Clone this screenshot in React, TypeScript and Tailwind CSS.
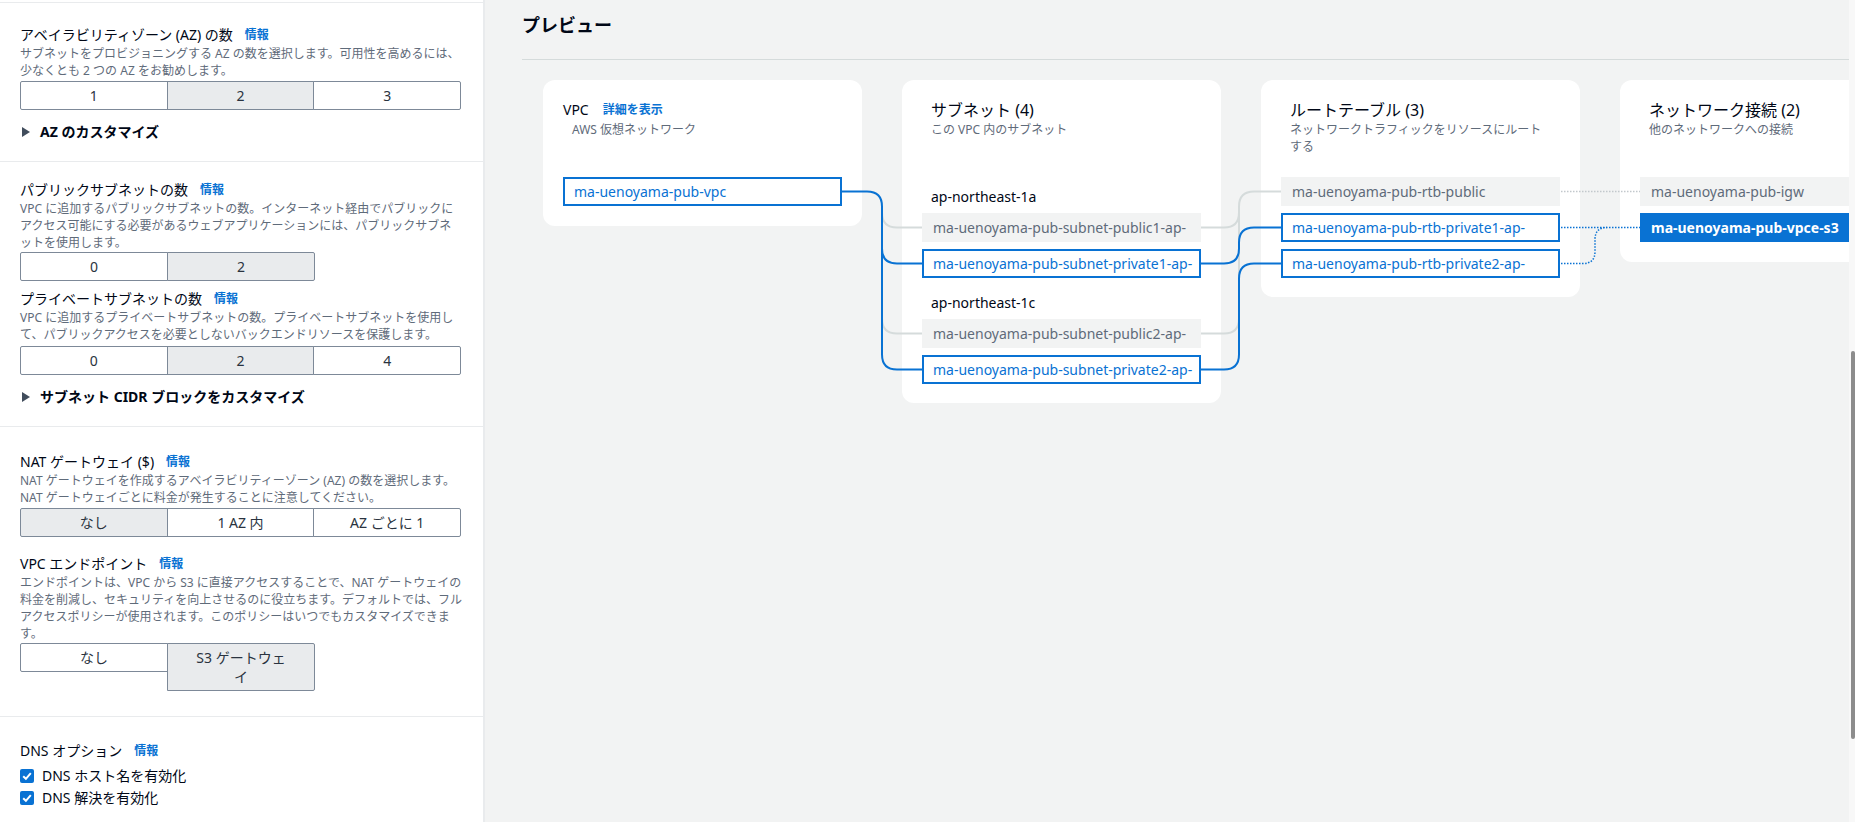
import React from "react";

type BoxKind = "gray" | "outline" | "solid";

function InfoLink() {
  return <a className="ml-[12px] text-[12px] font-bold text-[#0972d3] cursor-pointer">情報</a>;
}

function FieldTitle({ children }: { children: React.ReactNode }) {
  return (
    <div className="flex items-center text-[14px] leading-[20px] text-[#000716]">
      <span>{children}</span>
      <InfoLink />
    </div>
  );
}

function Desc({ children, className = "" }: { children: React.ReactNode; className?: string }) {
  return <p className={`text-[12px] leading-[17px] text-[#5f6b7a] ${className}`}>{children}</p>;
}

function Segmented({
  options,
  selected,
  className = "",
}: {
  options: React.ReactNode[];
  selected: number;
  className?: string;
}) {
  return (
    <div className={`flex items-start ${className}`}>
      {options.map((opt, i) => (
        <button
          key={i}
          className={`flex-1 -ml-px first:ml-0 border border-[#7d8998] py-[4px] text-[14px] leading-[19px] text-[#2a3340] text-center first:rounded-l-[2px] last:rounded-r-[2px] ${
            i === selected ? "bg-[#e9ebed]" : "bg-white"
          }`}
        >
          {opt}
        </button>
      ))}
    </div>
  );
}

function Expander({ children }: { children: React.ReactNode }) {
  return (
    <div className="flex items-center gap-[10px] text-[14px] font-bold leading-[20px] text-[#000716]">
      <svg width="8" height="10" viewBox="0 0 8 10" className="ml-[2px]">
        <path d="M0 0 L8 5 L0 10 Z" fill="#414d5c" />
      </svg>
      <span>{children}</span>
    </div>
  );
}

function Checkbox({ label }: { label: string }) {
  return (
    <label className="flex items-center gap-[8px] text-[14px] leading-[22px] text-[#000716]">
      <span className="flex h-[14px] w-[14px] items-center justify-center rounded-[2px] bg-[#0972d3]">
        <svg width="14" height="14" viewBox="0 0 14 14">
          <path d="M3.2 7.2 L5.9 9.8 L10.8 4.2" stroke="white" strokeWidth="2" fill="none" />
        </svg>
      </span>
      {label}
    </label>
  );
}

function Box({ kind, children, w = "w-[279px]" }: { kind: BoxKind; children: React.ReactNode; w?: string }) {
  const base = `${w} h-[29px] overflow-hidden whitespace-nowrap text-[14px]`;
  if (kind === "gray")
    return <div className={`${base} bg-[#f2f3f3] px-[11px] leading-[29px] text-[#5f6b7a]`}>{children}</div>;
  if (kind === "solid")
    return <div className={`${base} bg-[#0972d3] px-[11px] leading-[29px] font-bold text-white`}>{children}</div>;
  return (
    <div className={`${base} border-2 border-[#0972d3] bg-white px-[9px] leading-[25px] text-[#0972d3]`}>{children}</div>
  );
}

function CardHeader({ title, desc }: { title: React.ReactNode; desc: React.ReactNode }) {
  return (
    <div className="h-[77px] pl-[9px]">
      <div className="text-[16px] leading-[20px] text-[#000716]">{title}</div>
      <div className="mt-[1px] text-[12px] leading-[17px] text-[#5f6b7a]">{desc}</div>
    </div>
  );
}

function Connectors() {
  const blue = "#0972d3";
  const gray = "#d5dbdb";
  return (
    <svg
      className="pointer-events-none absolute left-0 top-0 z-10 overflow-visible"
      width="1200"
      height="330"
      fill="none"
    >
      {/* gray links */}
      <g stroke={gray} strokeWidth="2">
        <path d="M339 132.5 Q339 147.5 354 147.5 H379" />
        <path d="M339 238.5 Q339 253.5 354 253.5 H379" />
        <path d="M658 147.5 H681 Q696 147.5 696 132.5 V126.5 Q696 111.5 711 111.5 H738" />
        <path d="M658 253.5 H681 Q696 253.5 696 238.5 V126.5" />
      </g>
      {/* blue links */}
      <g stroke={blue} strokeWidth="2">
        <path d="M299 111.5 H324 Q339 111.5 339 126.5 V274.5 Q339 289.5 354 289.5 H379" />
        <path d="M339 168.5 Q339 183.5 354 183.5 H379" />
        <path d="M658 183.5 H681 Q696 183.5 696 168.5 V162.5 Q696 147.5 711 147.5 H738" />
        <path d="M658 289.5 H681 Q696 289.5 696 274.5 V198.5 Q696 183.5 711 183.5 H738" />
      </g>
      {/* dotted links */}
      <path d="M1018 111.5 H1097" stroke="#c2c8cc" strokeWidth="1.5" strokeDasharray="1.5 1.5" />
      <g stroke={blue} strokeWidth="1.5" strokeDasharray="1.5 1.5">
        <path d="M1018 147.5 H1097" />
        <path d="M1018 183.5 H1040 Q1052 183.5 1052 171.5 V159.5 Q1052 147.5 1064 147.5" />
      </g>
    </svg>
  );
}

function Preview() {
  return (
    <main className="h-[822px] flex-1 overflow-hidden bg-[#f2f3f3] pl-[37px]">
      <h2 className="pt-[13px] text-[18px] font-bold leading-[24px] text-[#000716]">プレビュー</h2>
      <div className="mt-[22px] border-t border-[#d5dbdb]" />
      <div className="pl-[21px] pt-[20px]">
        <div className="relative flex items-start gap-[40px]">
          {/* VPC */}
          <div className="w-[319px] shrink-0 rounded-[12px] bg-white px-[20px] pt-[20px] pb-[20px]">
            <div className="h-[77px]">
              <div className="flex items-center text-[14px] leading-[20px] text-[#000716]">
                VPC
                <a className="ml-[14px] text-[12px] font-bold text-[#0972d3]">詳細を表示</a>
              </div>
              <div className="mt-[1px] pl-[9px] text-[12px] leading-[17px] text-[#5f6b7a]">AWS 仮想ネットワーク</div>
            </div>
            <Box kind="outline">ma-uenoyama-pub-vpc</Box>
          </div>

          {/* Subnets */}
          <div className="w-[319px] shrink-0 rounded-[12px] bg-white px-[20px] pt-[20px] pb-[19px]">
            <CardHeader title="サブネット (4)" desc="この VPC 内のサブネット" />
            <div className="mt-[10px] pl-[9px] text-[14px] leading-[20px] text-[#000716]">ap-northeast-1a</div>
            <div className="mt-[6px] flex flex-col gap-[7px]">
              <Box kind="gray">ma-uenoyama-pub-subnet-public1-ap-</Box>
              <Box kind="outline">ma-uenoyama-pub-subnet-private1-ap-</Box>
            </div>
            <div className="mt-[15px] pl-[9px] text-[14px] leading-[20px] text-[#000716]">ap-northeast-1c</div>
            <div className="mt-[6px] flex flex-col gap-[7px]">
              <Box kind="gray">ma-uenoyama-pub-subnet-public2-ap-</Box>
              <Box kind="outline">ma-uenoyama-pub-subnet-private2-ap-</Box>
            </div>
          </div>

          {/* Route tables */}
          <div className="w-[319px] shrink-0 rounded-[12px] bg-white px-[20px] pt-[20px] pb-[19px]">
            <CardHeader
              title="ルートテーブル (3)"
              desc={<div className="w-[256px]">ネットワークトラフィックをリソースにルートする</div>}
            />
            <div className="flex flex-col gap-[7px]">
              <Box kind="gray">ma-uenoyama-pub-rtb-public</Box>
              <Box kind="outline">ma-uenoyama-pub-rtb-private1-ap-</Box>
              <Box kind="outline">ma-uenoyama-pub-rtb-private2-ap-</Box>
            </div>
          </div>

          {/* Network connections */}
          <div className="w-[320px] shrink-0 rounded-[12px] bg-white pl-[20px] pt-[20px] pb-[20px]">
            <CardHeader title="ネットワーク接続 (2)" desc="他のネットワークへの接続" />
            <div className="flex flex-col gap-[7px]">
              <Box kind="gray" w="w-[300px]">ma-uenoyama-pub-igw</Box>
              <Box kind="solid" w="w-[300px]">ma-uenoyama-pub-vpce-s3</Box>
            </div>
          </div>

          <Connectors />
        </div>
      </div>
    </main>
  );
}

function Settings() {
  return (
    <aside className="h-[822px] w-[485px] shrink-0 overflow-hidden border-r-2 border-[#e9ebed] bg-white">
      <div className="h-[2px]" />
      <section className="border-y border-[#e9ebed] pl-[20px] pr-[22px] pt-[22px] pb-[19px]">
        <FieldTitle>アベイラビリティゾーン (AZ) の数</FieldTitle>
        <Desc>サブネットをプロビジョニングする AZ の数を選択します。可用性を高めるには、少なくとも 2 つの AZ をお勧めします。</Desc>
        <Segmented className="mt-[2px]" options={["1", "2", "3"]} selected={1} />
        <div className="mt-[12px]">
          <Expander>AZ のカスタマイズ</Expander>
        </div>
      </section>

      <section className="border-b border-[#e9ebed] pl-[20px] pr-[22px] pt-[18px] pb-[19px]">
        <FieldTitle>パブリックサブネットの数</FieldTitle>
        <Desc>VPC に追加するパブリックサブネットの数。インターネット経由でパブリックにアクセス可能にする必要があるウェブアプリケーションには、パブリックサブネットを使用します。</Desc>
        <Segmented className="mt-[1px] w-[295px]" options={["0", "2"]} selected={1} />
        <div className="mt-[8px]">
          <FieldTitle>プライベートサブネットの数</FieldTitle>
        </div>
        <Desc>VPC に追加するプライベートサブネットの数。プライベートサブネットを使用して、パブリックアクセスを必要としないバックエンドリソースを保護します。</Desc>
        <Segmented className="mt-[3px]" options={["0", "2", "4"]} selected={1} />
        <div className="mt-[12px]">
          <Expander>サブネット CIDR ブロックをカスタマイズ</Expander>
        </div>
      </section>

      <section className="border-b border-[#e9ebed] pl-[20px] pr-[22px] pt-[25px] pb-[25px]">
        <FieldTitle>NAT ゲートウェイ ($)</FieldTitle>
        <Desc>NAT ゲートウェイを作成するアベイラビリティーゾーン (AZ) の数を選択します。NAT ゲートウェイごとに料金が発生することに注意してください。</Desc>
        <Segmented className="mt-[2px]" options={["なし", "1 AZ 内", "AZ ごとに 1"]} selected={0} />
        <div className="mt-[17px]">
          <FieldTitle>VPC エンドポイント</FieldTitle>
        </div>
        <Desc className="w-[450px]">
          エンドポイントは、VPC から S3 に直接アクセスすることで、NAT ゲートウェイの料金を削減し、セキュリティを向上させるのに役立ちます。デフォルトでは、フルアクセスポリシーが使用されます。このポリシーはいつでもカスタマイズできます。
        </Desc>
        <Segmented
          className="mt-[1px] w-[295px]"
          options={["なし", <span className="inline-block w-[96px]">S3 ゲートウェイ</span>]}
          selected={1}
        />
      </section>

      <section className="pl-[20px] pr-[22px] pt-[24px]">
        <FieldTitle>DNS オプション</FieldTitle>
        <div className="mt-[4px]">
          <Checkbox label="DNS ホスト名を有効化" />
          <Checkbox label="DNS 解決を有効化" />
        </div>
      </section>
    </aside>
  );
}

export default function App() {
  return (
    <div className="flex h-[822px] w-[1855px] overflow-hidden font-['Noto_Sans','Noto_Sans_CJK_JP',sans-serif]">
      <Settings />
      <Preview />
      <div className="h-[822px] w-[6px] shrink-0 bg-[#f8f8f8] pt-[351px]">
        <div className="ml-[2px] h-[388px] w-[4px] rounded-full bg-[#8c8c8c]" />
      </div>
    </div>
  );
}
